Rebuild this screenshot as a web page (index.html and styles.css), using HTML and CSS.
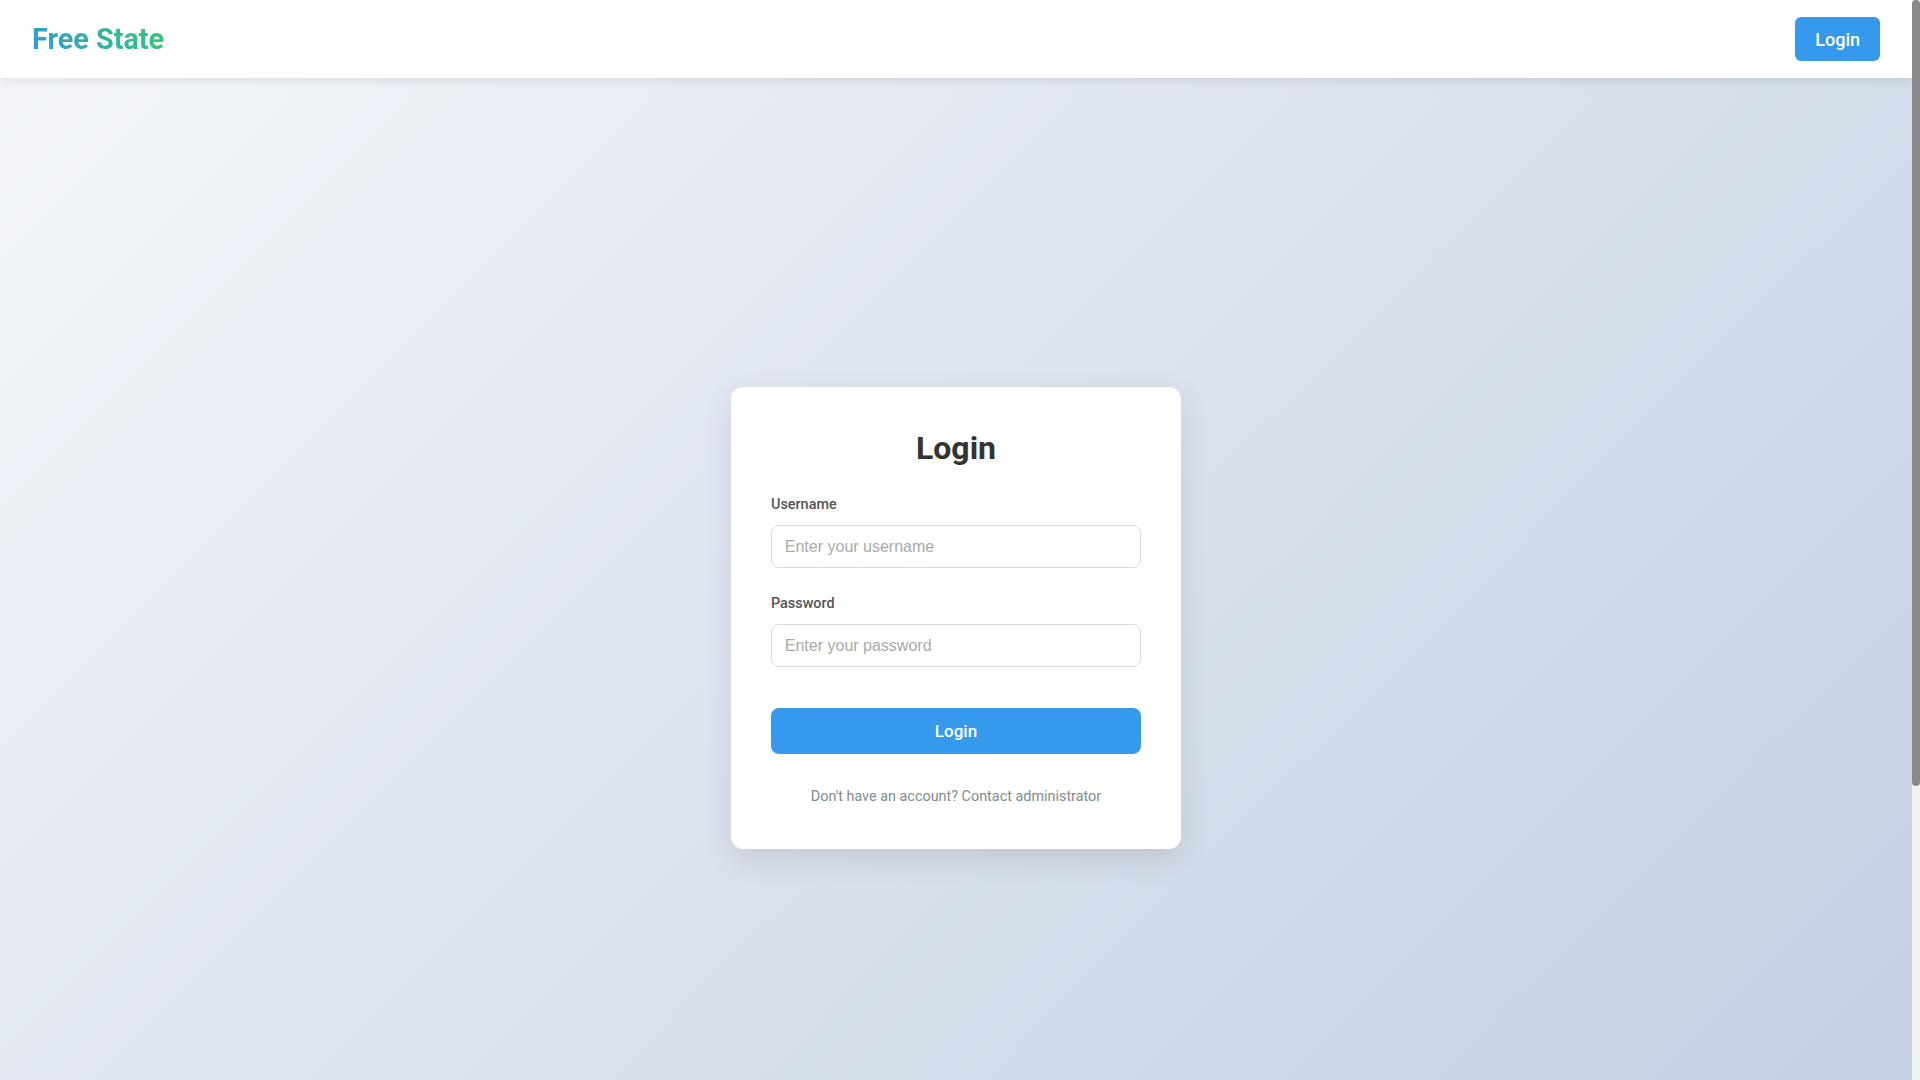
FILE: index.html
```html
<html>

<head>
    <meta charset="UTF-8">
    <meta name="viewport" content="width=device-width, initial-scale=1.0">
    <title>Free State - Login</title>
    <link rel="stylesheet" href="styles.css">
</head>

<body>
    <header class="header">
        <div class="logo">Free State</div>
        <button class="btn btn-small">Login</button>
    </header>
    <main class="main">
        <div class="card">
            <h2>Login</h2>
            <form onsubmit="return false;">
                <div class="form-group">
                    <label for="username">Username</label>
                    <input type="text" id="username" placeholder="Enter your username">
                </div>
                <div class="form-group">
                    <label for="password">Password</label>
                    <input type="password" id="password" placeholder="Enter your password">
                </div>
                <button class="btn btn-block" type="submit">Login</button>
            </form>
            <p class="note">Don't have an account? Contact administrator</p>
        </div>
    </main>
    <footer class="footer"></footer>
    <div class="scrollbar"><div class="thumb"></div></div>
</body>

</html>
```

FILE: styles.css
```css
* {
    box-sizing: border-box;
}
body {
    margin: 0;
    padding-right: 8px;
    font-family: Roboto, "Noto Sans", sans-serif;
    line-height: 1.6;
    color: #333;
    background: linear-gradient(135deg, #f5f7fa 0%, #c3cfe2 100%) fixed;
}
::-webkit-scrollbar {
    display: none;
}
/* scrollbar as it looked in the styled page */
.scrollbar {
    position: fixed;
    top: 0;
    right: 0;
    width: 8px;
    height: 100vh;
    background: #f1f1f1;
    z-index: 10;
}
.scrollbar .thumb {
    height: 786px;
    background: #888;
    border-radius: 4px;
}
.header {
    height: 78px;
    padding: 0 32px;
    display: flex;
    align-items: center;
    justify-content: space-between;
    background: #fff;
    box-shadow: 0 2px 10px rgba(0, 0, 0, 0.1);
    position: relative;
}
.logo {
    font-size: 28.8px;
    font-weight: 700;
    line-height: 1.2;
    background: linear-gradient(45deg, #3498db, #2ecc71);
    -webkit-background-clip: text;
    background-clip: text;
    color: transparent;
}
.btn {
    font-family: Roboto, "Noto Sans", sans-serif;
    font-weight: 500;
    color: #fff;
    background: #3699ec;
    border: none;
    border-radius: 8px;
    cursor: pointer;
}
.btn-small {
    height: 44px;
    padding: 0 20px;
    font-size: 18px;
    border-radius: 6px;
}
.main {
    min-height: 100vh;
    display: flex;
    align-items: center;
    justify-content: center;
}
.card {
    width: 450px;
    padding: 41px 40px 41px;
    background: #fff;
    border-radius: 12px;
    box-shadow: 0 10px 30px rgba(0, 0, 0, 0.1);
}
.card h2 {
    margin: 0 0 24px;
    font-size: 32px;
    line-height: 1.3;
    text-align: center;
    color: #333;
}
.form-group {
    margin-bottom: 24px;
}
.form-group label {
    display: block;
    margin-bottom: 9px;
    font-size: 14.4px;
    font-weight: 500;
    color: #555;
}
.form-group input {
    width: 100%;
    height: 43px;
    padding: 0 12.8px;
    font-family: "Liberation Sans", Arial, sans-serif;
    font-size: 16px;
    border: 1px solid #ddd;
    border-radius: 8px;
    outline: none;
}
.form-group input::placeholder {
    color: #a9a9a9;
}
.btn-block {
    display: block;
    width: 100%;
    height: 46px;
    margin-top: 41px;
    font-size: 17px;
}
.note {
    margin: 31px 0 0;
    font-size: 14.4px;
    text-align: center;
    color: #7f8c8d;
}
.footer {
    height: 326px;
}
```
